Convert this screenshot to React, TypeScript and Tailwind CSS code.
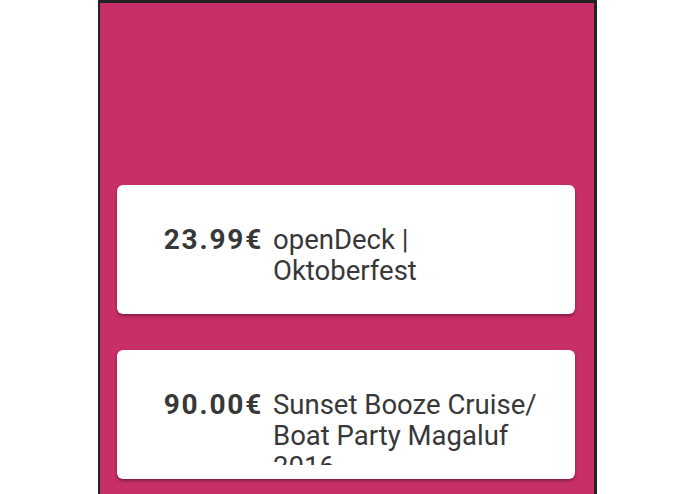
export default function App() {
  const items = [
    { price: "23.99€", title: "openDeck | Oktoberfest" },
    { price: "90.00€", title: "Sunset Booze Cruise/ Boat Party Magaluf 2016" },
  ];
  return (
    <div className="h-[494px] w-[695px] overflow-hidden bg-white pl-[98px]" style={{ fontFamily: "Roboto, sans-serif" }}>
      <div className="h-[494px] w-[499px] border-l-2 border-r-[3px] border-t-[3px] border-[#232323] bg-[#c82e68] pt-[182px] pl-[17px]">
        <div className="flex flex-col gap-[36px]">
          {items.map((it) => (
            <div
              key={it.price}
              className="flex h-[129px] w-[458px] items-start rounded-[6px] bg-white pt-[39px] shadow-[0_2px_3px_rgba(0,0,0,0.35)]"
            >
              <div className="w-[146px] shrink-0 text-right text-[28px] font-bold leading-[31px] tracking-[1.8px] text-[#383838]">
                {it.price}
              </div>
              <div className="ml-[10px] h-[76px] w-[272px] overflow-hidden text-[27.5px] leading-[31px] text-[#383838]">
                {it.title}
              </div>
            </div>
          ))}
        </div>
      </div>
    </div>
  );
}
